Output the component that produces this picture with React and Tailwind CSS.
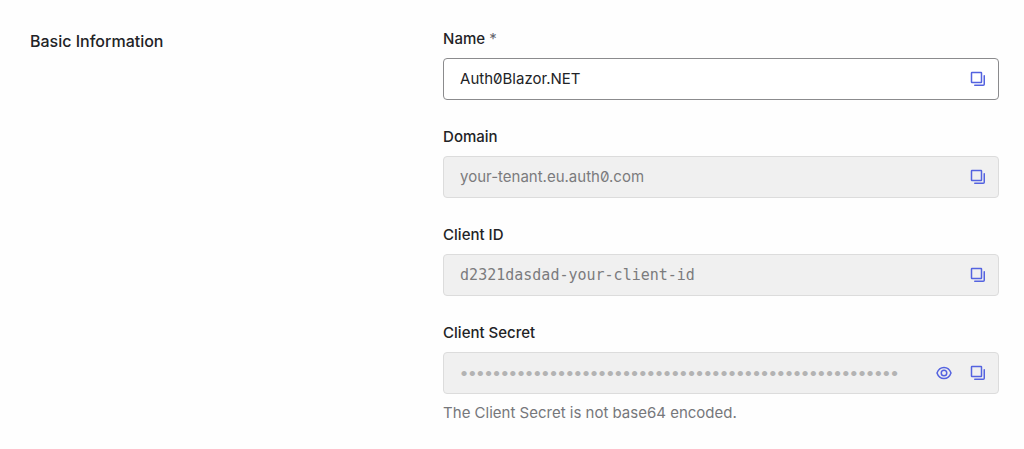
import { useState } from "react";

function CopyIcon() {
  return (
    <svg width="16" height="16" viewBox="0 0 16 16" fill="none" stroke="currentColor" strokeWidth="1.5" strokeLinejoin="round" strokeLinecap="round" aria-hidden="true">
      <rect x="1.5" y="1.5" width="10" height="10" rx="0.5" />
      <path d="M14.25 4.75V13.25a1 1 0 0 1-1 1H4.75" />
    </svg>
  );
}

function EyeIcon() {
  return (
    <svg width="16" height="16" viewBox="0 0 16 16" fill="none" stroke="currentColor" strokeWidth="1.5" strokeLinejoin="round" aria-hidden="true">
      <path d="M1 8C2.2 4.6 4.8 2.500 8 2.500S13.8 4.600 15 8c-1.200 3.400-3.800 5.500-7 5.500S2.200 11.400 1 8Z" />
      <circle cx="8" cy="8" r="2.75" />
    </svg>
  );
}

function IconButton({ label, onClick, children }) {
  return (
    <button type="button" aria-label={label} onClick={onClick} className="flex size-6 shrink-0 items-center justify-center rounded text-[#5463e0]">
      {children}
    </button>
  );
}

function Field({ id, label, required, disabled, inputClass, type = "text", defaultValue, help, children }) {
  return (
    <div>
      <label htmlFor={id} className="mb-[7px] block text-[15px] leading-6 font-medium text-[#222326]">
        {label}
        {required && <span className="font-normal text-[#65676e]"> *</span>}
      </label>
      <div className={`flex h-[42px] items-center gap-[10px] rounded border pr-2 pl-4 ${disabled ? "border-[#dcdcdc] bg-[#f0f0f0]" : "border-[#8b8b8d] bg-white"}`}>
        <input
          id={id}
          type={type}
          defaultValue={defaultValue}
          readOnly={disabled}
          required={required}
          autoComplete="off"
          className={`min-w-0 flex-1 bg-transparent outline-none ${inputClass}`}
        />
        {children}
      </div>
      {help && <p className="mt-[7px] text-[15px] leading-6 text-[#76777b]">{help}</p>}
    </div>
  );
}

const copy = (id) => () => navigator.clipboard?.writeText(document.getElementById(id).value);

export default function App() {
  const [shown, setShown] = useState(false);
  return (
    <main className="grid min-h-screen grid-cols-[5fr_7fr] gap-4 bg-[#fefefe] pt-[27px] pr-[25px] pb-6 pl-[30px] font-['Inter',sans-serif] [font-feature-settings:'zero']">
      <h2 className="text-base leading-7 font-medium text-[#222326]">Basic Information</h2>
      <form className="flex flex-col gap-[25px]">
        <Field id="name" label="Name" required defaultValue="Auth0Blazor.NET" inputClass="text-[15px] text-[#222326]">
          <IconButton label="Copy name" onClick={copy("name")}><CopyIcon /></IconButton>
        </Field>
        <Field id="domain" label="Domain" disabled defaultValue="your-tenant.eu.auth0.com" inputClass="text-[15px] text-[#7b7b7d]">
          <IconButton label="Copy domain" onClick={copy("domain")}><CopyIcon /></IconButton>
        </Field>
        <Field id="client-id" label="Client ID" disabled defaultValue="d2321dasdad-your-client-id" inputClass="font-['DejaVu_Sans_Mono',monospace] text-[15px] text-[#7b7b7d]">
          <IconButton label="Copy client ID" onClick={copy("client-id")}><CopyIcon /></IconButton>
        </Field>
        <Field
          id="client-secret"
          label="Client Secret"
          disabled
          type={shown ? "text" : "password"}
          defaultValue={"x".repeat(54)}
          inputClass="font-['Lato',sans-serif] text-sm text-[#b3b3b3]"
          help="The Client Secret is not base64 encoded."
        >
          <IconButton label="Show client secret" onClick={() => setShown(!shown)}><EyeIcon /></IconButton>
          <IconButton label="Copy client secret" onClick={copy("client-secret")}><CopyIcon /></IconButton>
        </Field>
      </form>
    </main>
  );
}
